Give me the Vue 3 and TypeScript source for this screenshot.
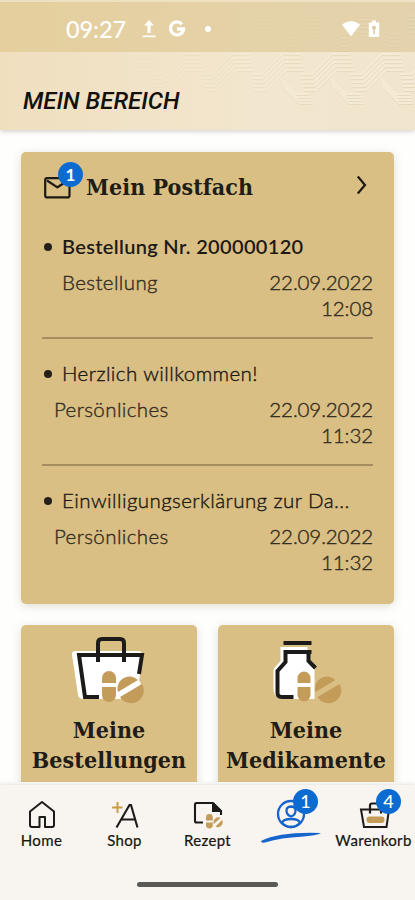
<script setup lang="ts">
interface Message {
  title: string
  kind: string
  date: string
  time: string
  unread: boolean
}

const messages: Message[] = [
  { title: 'Bestellung Nr. 200000120', kind: 'Bestellung', date: '22.09.2022', time: '12:08', unread: true },
  { title: 'Herzlich willkommen!', kind: 'Persönliches', date: '22.09.2022', time: '11:32', unread: false },
  { title: 'Einwilligungserklärung zur Da...', kind: 'Persönliches', date: '22.09.2022', time: '11:32', unread: false },
]

// Bundles of parallel bent lines for the header ornament
const lines: string[] = []
for (let b = 0; b < 7; b++) {
  const x = 100 + b * 50
  for (let i = 0; i < 5; i++) {
    const y = 54 + i * 4
    lines.push(`M${x + i} ${y + 20}h12l20 -20h18`)
    if (b > 2 && i < 4) lines.push(`M${x + 30 + i} ${y + 24 - i}l16 16h14`)
    if (b > 2) lines.push(`M${x + 6} ${y - 38}h16l18 18h8`)
  }
}
const ornament = lines.join('')
</script>

<template>
  <div class="screen">
    <header class="header">
      <svg class="ornament" viewBox="0 0 415 130" width="415" height="130" fill="none">
        <defs>
          <linearGradient id="fade" x1="0" x2="1" y1="0" y2="0">
            <stop offset=".25" stop-color="#fff" stop-opacity="0" />
            <stop offset=".75" stop-color="#fff" stop-opacity=".8" />
            <stop offset="1" stop-color="#fff" />
          </linearGradient>
          <mask id="m"><rect width="415" height="130" fill="url(#fade)" /></mask>
        </defs>
        <g mask="url(#m)">
          <path :d="ornament" stroke="#d9c59f" stroke-width="1" opacity=".4" transform="translate(0 1.500)" />
          <path :d="ornament" stroke="#fff9ea" stroke-width="1.500" opacity=".4" />
        </g>
      </svg>
      <div class="status">
        <span class="clock">09:27</span>
        <svg class="upload" width="16" height="20" viewBox="0 0 16 20" fill="#fff">
          <path d="M8 1l5 5.500H9.600V14H6.400V6.500H3z" /><path d="M1.500 16.500h13v1.700h-13z" />
        </svg>
        <svg class="google" width="18" height="18" viewBox="0 0 18 18" fill="none" stroke="#fff" stroke-width="3.300">
          <path d="M14 4.200A6.500 6.500 0 1 0 15.500 9H9" />
        </svg>
        <span class="dot"></span>
        <svg class="wifi" width="20" height="18" viewBox="0 0 20 18" fill="#fff">
          <path d="M.8 4.400Q10-2.600 19.200 4.400L10 16.500z" />
        </svg>
        <svg class="battery" width="12" height="18" viewBox="0 0 12 18">
          <path fill="#fff" d="M4 .5h4v2h2.200q1 0 1 1V16q0 1-1 1H1.800q-1 0-1-1V3.500q0-1 1-1H4z" />
          <path fill="#dcc99d" d="M4.200 6h3.600v3.200H6.700V14H5.300V9.200H4.200z" />
        </svg>
      </div>
      <h1 class="page-title">MEIN BEREICH</h1>
    </header>

    <main class="content">
      <section class="card inbox">
        <div class="inbox-head">
          <span class="mail">
            <svg width="27" height="22" viewBox="0 0 27 22" fill="none" stroke="#1d1a15" stroke-width="2.200" stroke-linejoin="round">
              <rect x="1.200" y="1.200" width="24.300" height="19.200" rx="2" /><path d="M3 3.500l10.400 6.800L24 3.500" />
            </svg>
            <span class="badge">1</span>
          </span>
          <h2 class="heading">Mein Postfach</h2>
          <svg class="chevron" width="12" height="20" viewBox="0 0 12 20" fill="none" stroke="#1d1a15" stroke-width="2.200">
            <path d="M1.800 1.500L9 10l-7.200 8.500" />
          </svg>
        </div>
        <ul class="messages">
          <li v-for="(m, i) in messages" :key="i" class="message" :class="{ unread: m.unread }">
            <p class="subject"><i class="bullet"></i><span>{{ m.title }}</span></p>
            <div class="meta">
              <span class="kind">{{ m.kind }}</span>
              <span class="date">{{ m.date }}<br />{{ m.time }}</span>
            </div>
          </li>
        </ul>
      </section>

      <div class="tiles">
        <section class="card tile">
          <svg width="80" height="70" viewBox="0 0 80 70" fill="none">
            <path d="M8 16h62q5 0 4 5l-5 43H15q-4 0-5-4L4 20q-1-4 4-4z" fill="#fff" />
            <path d="M31 62H17L11 20h63l-3 19" stroke="#1d1b19" stroke-width="4" />
            <path d="M30 27V8q0-4 4-4h18q4 0 4 4v19" stroke="#1d1b19" stroke-width="4" />
            <path d="M32 49h17M49 61l23-14" stroke="#fff" stroke-width="5" />
            <path d="M34 48v-5a7 7 0 0 1 14 0v5zM34 52h14v8a7 7 0 0 1-14 0z" fill="#c49c59" />
            <path d="M50 57A12 12 0 0 1 70 45zM52 62l22-13A12 12 0 0 1 52 62z" fill="#c49c59" />
          </svg>
          <h2 class="heading">Meine<br /><span class="orders">Bestellungen</span></h2>
        </section>
        <section class="card tile">
          <svg width="80" height="70" viewBox="0 0 80 70" fill="none">
            <g transform="translate(-3.500 0)">
              <path d="M19 12h27v13l7 8v31H18q-6-3-6-10V34l7-8z" fill="#fff" />
              <path d="M22 8h28M22 17h28M24 17v10l-8 9v22q0 4 5 4h11M47 17v9l7 7" stroke="#1d1b19" stroke-width="4" />
              <path d="M34 48v-6a8.500 8.500 0 0 1 17 0v22H34z" fill="#fff" />
              <path d="M36 48v-5a6.500 6.500 0 0 1 13 0v5zM36 52h13v8a6.500 6.500 0 0 1-13 0z" fill="#c49c59" />
              <path d="M54 57A12 12 0 0 1 74 45zM56 62l22-13A12 12 0 0 1 56 62z" fill="#c49c59" />
            </g>
          </svg>
          <h2 class="heading">Meine<br /><span class="meds">Medikamente</span></h2>
        </section>
      </div>
    </main>

    <nav class="nav">
      <a class="tab">
        <svg width="30" height="30" viewBox="0 0 30 30" fill="none" stroke="#1d1b19" stroke-width="2">
          <path d="M3 11.500L15 2l12 9.500V25q0 2-2 2h-7V17h-5.500v10H5q-2 0-2-2z" stroke-linejoin="round" />
        </svg>
        <span>Home</span>
      </a>
      <a class="tab">
        <svg width="30" height="30" viewBox="0 0 30 30" fill="none">
          <path d="M7.500 2v11M2 7.500h10.500" stroke="#c99c4b" stroke-width="2" />
          <path d="M6.500 27.500L19.500 5h1.500l6.500 22.500M11 19.500h14" stroke="#1d1b19" stroke-width="2.100" />
        </svg>
        <span>Shop</span>
      </a>
      <a class="tab">
        <svg width="30" height="30" viewBox="0 0 30 30" fill="none">
          <path d="M10 22.500H3.500q-1.500 0-1.500-1.500V4.500Q2 3 3.500 3H20l8 8v4" stroke="#1d1b19" stroke-width="2.100" />
          <path d="M19 3h2l7.500 7.500V12H19z" fill="#1d1b19" />
          <path d="M13 20.500v-3a3.400 3.400 0 0 1 6.800 0v3zM13 22.500h6.800V25a3.400 3.400 0 0 1-6.800 0zM20.800 24A4.800 4.800 0 0 1 27.500 18zM22.500 26.500l6.500-6.500A4.800 4.800 0 0 1 22.500 26.500z" fill="#c49c59" />
        </svg>
        <span>Rezept</span>
      </a>
      <a class="tab active">
        <svg width="62" height="50" viewBox="0 0 62 50" fill="none" stroke="#1765cc" stroke-width="2.300">
          <circle cx="31" cy="15" r="13" />
          <path d="M31 7.500q4.500 0 4.500 4.300T31 17.500q-4.500-1.500-4.500-5.700T31 7.500z" />
          <path d="M22 24q1-4 9-4t9 4q-4 4-9 4t-9-4z" />
          <path d="M1 42Q20 32.500 61 34q-4 2.500-20 3.700Q22 38.500 5 43.500q-4 1-4-1.500z" fill="#1765cc" stroke="none" />
        </svg>
        <span class="badge">1</span>
      </a>
      <a class="tab cart">
        <svg width="32" height="30" viewBox="0 0 32 30" fill="none">
          <path d="M2 9.500h28l-2.500 17.500H5z" stroke="#1d1b19" stroke-width="2" />
          <path d="M11 13.500V5.500q0-2 2-2h7q2 0 2 2v8" stroke="#1d1b19" stroke-width="2.200" />
          <rect x="7.500" y="16.500" width="18" height="6.500" rx="3" fill="#c49c59" />
        </svg>
        <span>Warenkorb</span>
        <span class="badge">4</span>
      </a>
      <span class="home-bar"></span>
    </nav>
  </div>
</template>

<style>
body { background: #fefefd; }
</style>

<style scoped>
.screen {
  width: 415px;
  height: 900px;
  display: flex;
  flex-direction: column;
  overflow: hidden;
  background: #fefefd;
  color: #1d1a15;
  font-family: Lato, sans-serif;
}
h1, h2, p, ul { margin: 0; padding: 0; font-weight: inherit; }
.header {
  position: relative;
  height: 130px;
  flex: none;
  z-index: 1;
  background: linear-gradient(90deg, #f0dfbf, #f2e6ce 60%, #f1e5ce);
  box-shadow: 0 1px 5px rgba(90, 80, 60, .3);
}
.ornament { position: absolute; inset: 0; }
.status {
  position: relative;
  box-sizing: border-box;
  height: 52px;
  display: flex;
  align-items: center;
  padding: 4px 35px 0 66px;
  border-top: 2px solid #f0e0c2;
  background: linear-gradient(90deg, rgba(226, 203, 149, .8), rgba(220, 200, 155, .65));
  color: #fff;
}
.clock { width: 60px; font-size: 23.500px; font-weight: 500; line-height: 28px; letter-spacing: -.1px; }
.upload { margin-left: 15px; }
.google { margin-left: 11px; }
.dot { width: 6px; height: 6px; margin-left: 19px; border-radius: 50%; background: #fff; }
.wifi { margin-left: auto; }
.battery { margin-left: 7px; }
.page-title {
  position: relative;
  padding: 35px 0 0 23px;
  font: italic 500 24px/28px Roboto, sans-serif;
  letter-spacing: 0;
  color: #14110c;
}
.content {
  height: 652px;
  flex: none;
  box-sizing: border-box;
  padding: 22px 21px 0;
  overflow: hidden;
  display: flex;
  flex-direction: column;
  gap: 21px;
}
.card {
  background: #dabf84;
  border-radius: 5px;
  box-shadow: 0 2px 10px rgba(130, 115, 75, .24);
}
.inbox { height: 452px; flex: none; box-sizing: border-box; padding: 20px 21px 0; }
.inbox-head { display: flex; align-items: center; height: 30px; }
.mail { position: relative; width: 27px; height: 22px; margin-left: 2px; padding-top: 2px; }
.mail svg { display: block; }
.badge {
  position: absolute;
  width: 25px;
  height: 25px;
  border-radius: 50%;
  background: #0c6bd0;
  color: #fff;
  font: 500 17px/25px Lato, sans-serif;
  text-align: center;
}
.mail .badge { left: 14px; top: -13px; font-weight: 700; }
.heading {
  font-family: "DejaVu Serif Condensed", "DejaVu Serif", serif;
  font-stretch: condensed;
  font-weight: 700;
  font-size: 23px;
  line-height: 30px;
  letter-spacing: .08px;
  color: #211c16;
}
.inbox-head .heading { margin-left: 15px; white-space: nowrap; }
.chevron { margin: 0 5px 4px auto; }
.messages { list-style: none; padding-top: 31px; }
.message { height: 127px; box-sizing: border-box; border-bottom: 2px solid #a78e60; padding-top: 21px; }
.message:first-child { height: 106px; padding-top: 0; }
.message:last-child { border: 0; }
.subject {
  display: flex;
  align-items: center;
  height: 26px;
  font-size: 20.500px;
  font-weight: 300;
  line-height: 26px;
  letter-spacing: .43px;
  -webkit-text-stroke: .4px #1d1a15;
}
.subject span { white-space: nowrap; }
.bullet { width: 8px; height: 8px; flex: none; margin: 2px 10px 0 2px; border-radius: 50%; background: #252019; }
.unread .subject { font-size: 20px; font-weight: 600; letter-spacing: .33px; -webkit-text-stroke: 0; }
.meta {
  display: flex;
  justify-content: space-between;
  padding: 10px 0 0 12px;
  font-size: 20.500px;
  font-weight: 300;
  line-height: 26px;
  letter-spacing: .4px;
  color: #352e22;
  -webkit-text-stroke: .4px #352e22;
}
.unread .meta { padding-left: 20px; }
.date { text-align: right; letter-spacing: -.1px; }
.tiles { display: flex; gap: 21px; }
.tile {
  width: 176px;
  height: 180px;
  display: flex;
  flex-direction: column;
  align-items: center;
  box-sizing: border-box;
  padding-top: 10px;
}
.tile svg { flex: none; margin-left: -3px; }
.tile .heading { margin-top: 10px; text-align: center; white-space: nowrap; }
.nav {
  position: relative;
  flex: 1;
  display: flex;
  margin-top: 3px;
  background: #f8f4ef;
  box-shadow: 0 -1px 4px rgba(120, 110, 90, .2);
}
.tab {
  position: relative;
  width: 83px;
  height: 70px;
  display: flex;
  flex-direction: column;
  align-items: center;
  padding-top: 15px;
  font-size: 15px;
  line-height: 20px;
  letter-spacing: .35px;
  color: #17140f;
  -webkit-text-stroke: .2px #17140f;
}
.tab .badge { left: 44px; top: 4px; font-size: 18px; letter-spacing: 0; -webkit-text-stroke: 0; }
.active svg { margin-top: -1px; }
.cart svg { margin-left: 2px; }
.home-bar {
  position: absolute;
  left: 137px;
  bottom: 13px;
  width: 141px;
  height: 5px;
  border-radius: 3px;
  background: #5b5956;
}
</style>
